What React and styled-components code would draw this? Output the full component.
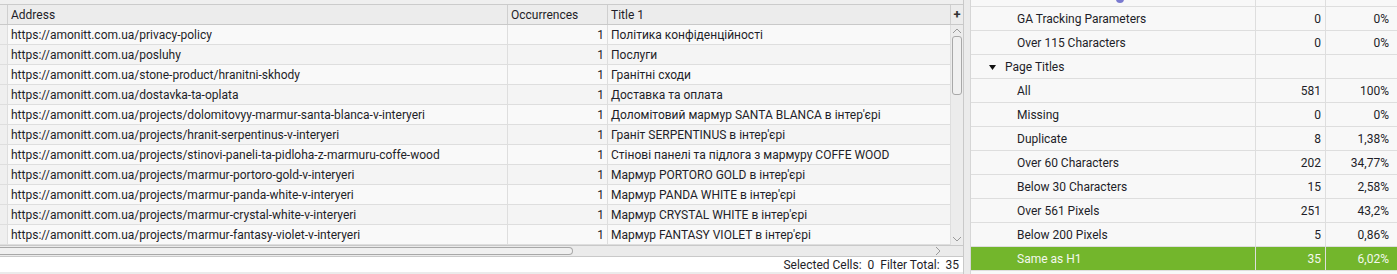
import React from 'react'
import styled, {createGlobalStyle} from 'styled-components'

const GlobalStyle = createGlobalStyle`
  html, body {
    margin: 0;
    padding: 0;
    background: #ebebeb;
    font-family: Roboto, "Liberation Sans", sans-serif;
    font-size: 12px;
    color: #1e1e28;
  }
`

const Page = styled.div`
  display: flex;
  width: 1397px;
  height: 274px;
  overflow: hidden;
  background: #ebebeb;
`

const LeftPanel = styled.div`
  display: flex;
  flex-direction: column;
  width: 963px;
  border-right: 1px solid #c9c9c9;
  background: #fff;
  flex-shrink: 0;
`

const TopStrip = styled.div`
  height: 4px;
  background: #efefef;
  border-bottom: 1px solid #cbcbcb;
`

const Grid = styled.div`
  display: flex;
  flex-direction: column;
`

const Row = styled.div`
  display: flex;
  height: 19px;
  border-bottom: 1px solid ${p => (p.head ? '#c9c9c9' : '#dedede')};
  background: ${p => (p.head ? '#ececec' : p.alt ? '#f4f4f4' : '#f9f9f9')};
`

const Cell = styled.div`
  display: flex;
  align-items: center;
  justify-content: ${p => (p.right ? 'flex-end' : 'flex-start')};
  width: ${p => p.w}px;
  box-sizing: border-box;
  padding: 1px 3px 0;
  border-right: 1px solid ${p => (p.head ? '#cfcfcf' : '#dedede')};
  white-space: nowrap;
  overflow: hidden;
  flex-shrink: 0;
  background: ${p => (p.gutter ? '#efefef' : 'transparent')};
`

const PlusCell = styled.div`
  width: 12px;
  display: flex;
  align-items: center;
  justify-content: center;
  font-weight: bold;
  font-size: 13px;
  color: #333;
`

const Body = styled.div`
  display: flex;
`

const Rows = styled.div`
  display: flex;
  flex-direction: column;
  width: 951px;
`

const VScroll = styled.div`
  width: 12px;
  height: 220px;
  background: #ececec;
  display: flex;
  flex-direction: column;
  align-items: center;
`

const Arrow = styled.svg`
  display: block;
  flex-shrink: 0;
`

const VThumb = styled.div`
  width: 8px;
  height: 57px;
  margin-top: 2px;
  border: 1px solid #a8a8a8;
  border-radius: 3px;
  background: #f0f0f0;
`

const Spacer = styled.div`
  flex: 1;
`

const Gap = styled.div`
  flex-shrink: 0;
  width: ${p => p.w || 0}px;
  height: ${p => p.h || 0}px;
`

const HScroll = styled.div`
  display: flex;
  align-items: center;
  height: 10px;
  border-top: 1px solid #c9c9c9;
  border-bottom: 1px solid #c9c9c9;
  background: #ebebeb;
  padding-right: 12px;
`

const HThumb = styled.div`
  width: 573px;
  height: 8px;
  box-sizing: border-box;
  border: 1px solid #a8a8a8;
  border-left: none;
  border-radius: 0 4px 4px 0;
  background: #f0f0f0;
`

const StatusBar = styled.div`
  display: flex;
  justify-content: flex-end;
  align-items: center;
  height: 15px;
  padding-right: 4px;
  background: #fff;
  white-space: pre;
`

const BottomStrip = styled.div`
  flex: 1;
  background: #ebebeb;
`

const RightPanel = styled.div`
  margin-left: 6px;
  flex: 1;
  display: flex;
  flex-direction: column;
  background: #f8f8f8;
  border-left: 1px solid #d6d6d6;
`

const StatRow = styled.div`
  display: flex;
  height: ${p => p.h || 23}px;
  border-bottom: 1px solid #dedede;
  background: ${p => (p.active ? '#73b62c' : '#f8f8f8')};
  color: ${p => (p.active ? '#f4f8ee' : '#1e1e28')};
  overflow: hidden;
`

const StatCell = styled.div`
  display: flex;
  align-items: center;
  justify-content: ${p => (p.right ? 'flex-end' : 'flex-start')};
  width: ${p => p.w}px;
  box-sizing: border-box;
  padding: ${p => (p.right ? '1px 4px 0 0' : `1px 0 0 ${p.indent}px`)};
  border-right: 1px solid ${p => (p.last ? 'transparent' : '#dedede')};
  white-space: nowrap;
  flex-shrink: 0;
  position: relative;
`

const Caret = styled.svg`
  display: block;
  margin-right: 9px;
  flex-shrink: 0;
`

const Dot = styled.div`
  position: absolute;
  left: 145px;
  top: -5px;
  width: 8px;
  height: 8px;
  border-radius: 50%;
  background: #7a7ad0;
`

const urls = [
  ['https://amonitt.com.ua/privacy-policy', 'Політика конфіденційності'],
  ['https://amonitt.com.ua/posluhy', 'Послуги'],
  ['https://amonitt.com.ua/stone-product/hranitni-skhody', 'Гранітні сходи'],
  ['https://amonitt.com.ua/dostavka-ta-oplata', 'Доставка та оплата'],
  [
    'https://amonitt.com.ua/projects/dolomitovyy-marmur-santa-blanca-v-interyeri',
    'Доломітовий мармур SANTA BLANCA в інтер\'єрі',
  ],
  [
    'https://amonitt.com.ua/projects/hranit-serpentinus-v-interyeri',
    'Граніт SERPENTINUS в інтер\'єрі',
  ],
  [
    'https://amonitt.com.ua/projects/stinovi-paneli-ta-pidloha-z-marmuru-coffe-wood',
    'Стінові панелі та підлога з мармуру COFFE WOOD',
  ],
  [
    'https://amonitt.com.ua/projects/marmur-portoro-gold-v-interyeri',
    'Мармур PORTORO GOLD в інтер\'єрі',
  ],
  [
    'https://amonitt.com.ua/projects/marmur-panda-white-v-interyeri',
    'Мармур PANDA WHITE в інтер\'єрі',
  ],
  [
    'https://amonitt.com.ua/projects/marmur-crystal-white-v-interyeri',
    'Мармур CRYSTAL WHITE в інтер\'єрі',
  ],
  [
    'https://amonitt.com.ua/projects/marmur-fantasy-violet-v-interyeri',
    'Мармур FANTASY VIOLET в інтер\'єрі',
  ],
]

const stats = [
  {label: 'GA Tracking Parameters', count: '0', pct: '0%'},
  {label: 'Over 115 Characters', count: '0', pct: '0%'},
  {label: 'Page Titles', group: true},
  {label: 'All', count: '581', pct: '100%'},
  {label: 'Missing', count: '0', pct: '0%'},
  {label: 'Duplicate', count: '8', pct: '1,38%'},
  {label: 'Over 60 Characters', count: '202', pct: '34,77%'},
  {label: 'Below 30 Characters', count: '15', pct: '2,58%'},
  {label: 'Over 561 Pixels', count: '251', pct: '43,2%'},
  {label: 'Below 200 Pixels', count: '5', pct: '0,86%'},
  {label: 'Same as H1', count: '35', pct: '6,02%', active: true},
]

const Chevron = ({up}) => (
  <Arrow width="10" height="6" viewBox="0 0 10 6">
    <path
      d={up ? 'M1 5 L5 1 L9 5' : 'M1 1 L5 5 L9 1'}
      fill="none"
      stroke="#9a9a9a"
      strokeWidth="1"
    />
  </Arrow>
)

const LeftTable = () => (
  <LeftPanel>
    <TopStrip />
    <Grid>
      <Row head>
        <Cell w={8} head />
        <Cell w={500} head>Address</Cell>
        <Cell w={100} head>Occurrences</Cell>
        <Cell w={343} head>Title 1</Cell>
        <PlusCell>+</PlusCell>
      </Row>
      <Body>
        <Rows>
          {urls.map(([url, title], i) => (
            <Row key={url} alt={i % 2 === 1}>
              <Cell w={8} gutter />
              <Cell w={500}>{url}</Cell>
              <Cell w={100} right>1</Cell>
              <Cell w={343}>{title}</Cell>
            </Row>
          ))}
        </Rows>
        <VScroll>
          <Gap h={3} />
          <Chevron up />
          <VThumb />
          <Spacer />
          <Chevron />
          <Gap h={3} />
        </VScroll>
      </Body>
    </Grid>
    <HScroll>
      <HThumb />
      <Spacer />
      <Arrow width="6" height="10" viewBox="0 0 6 10">
        <path d="M1 1 L5 5 L1 9" fill="none" stroke="#9a9a9a" strokeWidth="1" />
      </Arrow>
      <Gap w={10} />
    </HScroll>
    <StatusBar>Selected Cells:  0  Filter Total:  35</StatusBar>
    <BottomStrip />
  </LeftPanel>
)

const RightTable = () => (
  <RightPanel>
    <StatRow h={6}>
      <StatCell w={285} indent={0}>
        <Dot />
      </StatCell>
      <StatCell w={70} right />
      <StatCell w={68} right last />
    </StatRow>
    {stats.map(s => (
      <StatRow key={s.label} active={s.active}>
        <StatCell w={285} indent={s.group ? 18 : 46}>
          {s.group && (
            <Caret width="7" height="5" viewBox="0 0 7 5">
              <polygon points="0,0 7,0 3.5,5" fill="#111" />
            </Caret>
          )}
          {s.label}
        </StatCell>
        <StatCell w={70} right>
          {s.count}
        </StatCell>
        <StatCell w={68} right last>
          {s.pct}
        </StatCell>
      </StatRow>
    ))}
  </RightPanel>
)

export default function App() {
  return (
    <>
      <GlobalStyle />
      <Page>
        <LeftTable />
        <RightTable />
      </Page>
    </>
  )
}
